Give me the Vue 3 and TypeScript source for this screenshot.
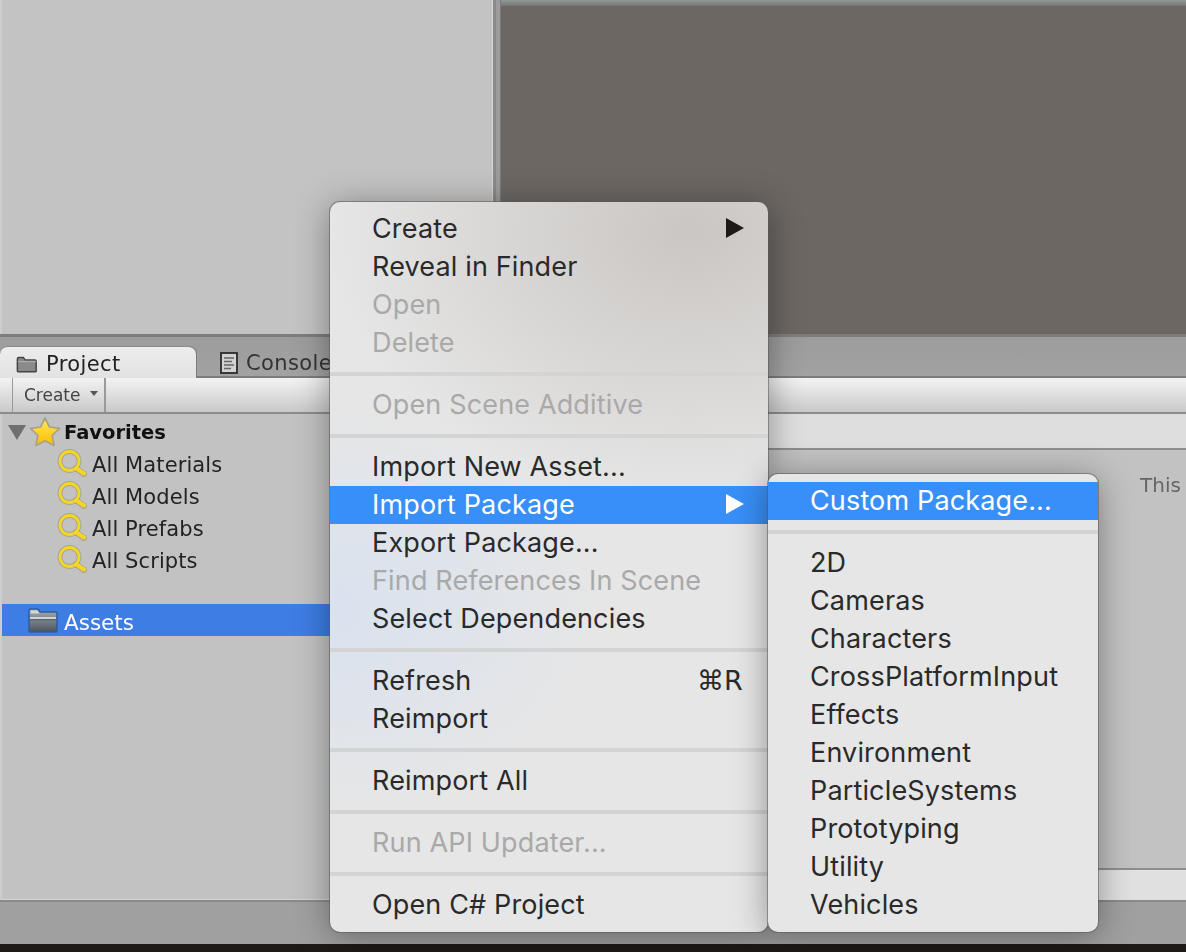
<script setup lang="ts">
type Row = { label?: string; off?: boolean; on?: boolean; sub?: boolean; key?: string; sep?: boolean }

const mainMenu: Row[] = [
  { label: 'Create', sub: true },
  { label: 'Reveal in Finder' },
  { label: 'Open', off: true },
  { label: 'Delete', off: true },
  { sep: true },
  { label: 'Open Scene Additive', off: true },
  { sep: true },
  { label: 'Import New Asset...' },
  { label: 'Import Package', on: true, sub: true },
  { label: 'Export Package...' },
  { label: 'Find References In Scene', off: true },
  { label: 'Select Dependencies' },
  { sep: true },
  { label: 'Refresh', key: '⌘R' },
  { label: 'Reimport' },
  { sep: true },
  { label: 'Reimport All' },
  { sep: true },
  { label: 'Run API Updater...', off: true },
  { sep: true },
  { label: 'Open C# Project' },
]

const subMenu: Row[] = [
  { label: 'Custom Package...', on: true },
  { sep: true },
  ...['2D', 'Cameras', 'Characters', 'CrossPlatformInput', 'Effects', 'Environment', 'ParticleSystems', 'Prototyping', 'Utility', 'Vehicles'].map((label) => ({ label })),
]

const favorites = ['All Materials', 'All Models', 'All Prefabs', 'All Scripts']
</script>

<template>
  <div class="window">
    <div class="top">
      <div class="hierarchy"></div>
      <div class="split"></div>
      <div class="scene"><div class="scene-strip"></div></div>
    </div>

    <div class="tabs">
      <div class="tab active">
        <svg width="22" height="20" viewBox="0 0 24 20" class="tab-icon">
          <path d="M1.500 17.500V4.500q0-1.500 1.500-1.500h5l2 2.500h10.500q1.500 0 1.500 1.500v10.500q0 1-1 1H2.500q-1 0-1-1z" fill="#8a8a8a" stroke="#444" stroke-width="1.600" />
          <path d="M2 7.500h20" stroke="#b5b5b5" stroke-width="1" />
        </svg>
        <span>Project</span>
      </div>
      <div class="tab">
        <svg width="18" height="22" viewBox="0 0 18 22" class="tab-icon">
          <rect x="1" y="1" width="16" height="20" fill="#d2d2d2" stroke="#2b2b2b" stroke-width="1.800" />
          <path d="M4 6h10M4 9.500h8M4 13h10M4 16.500h7" stroke="#666" stroke-width="1.500" />
        </svg>
        <span>Console</span>
      </div>
    </div>

    <div class="toolbar">
      <div class="create-btn">
        <span>Create</span>
        <i class="caret"></i>
      </div>
    </div>

    <div class="browser">
      <aside class="sidebar">
        <div class="fav-head">
          <i class="fold"></i>
          <svg width="32" height="30" viewBox="0 0 32 30">
            <defs>
              <linearGradient id="star-fill" x1="0" y1="0" x2="0" y2="1">
                <stop offset="0" stop-color="#ffe65a" />
                <stop offset="1" stop-color="#fdbf00" />
              </linearGradient>
            </defs>
            <path d="M16 1l4.500 9 10 1.400-7.300 7 1.800 10L16 23.700l-9 4.700 1.800-10-7.300-7 10-1.400z" fill="url(#star-fill)" stroke="#a8a288" stroke-width="1.700" stroke-linejoin="round" />
          </svg>
          <span>Favorites</span>
        </div>
        <div v-for="f in favorites" :key="f" class="fav-row">
          <svg width="30" height="30" viewBox="0 0 30 30">
            <circle cx="12.500" cy="12" r="9.500" fill="none" stroke="#8f8f70" stroke-width="4.800" opacity=".55" />
            <path d="M19 19l8 6" stroke="#8f8f70" stroke-width="6" stroke-linecap="round" opacity=".55" />
            <circle cx="12.500" cy="12" r="9.500" fill="none" stroke="#f5d624" stroke-width="2.800" />
            <path d="M19 19l8 5.500" stroke="#f5d624" stroke-width="4" stroke-linecap="round" />
          </svg>
          <span>{{ f }}</span>
        </div>
        <div class="assets-row">
          <svg width="30" height="26" viewBox="0 0 30 26">
            <defs>
              <linearGradient id="folder-fill" x1="0" y1="0" x2="0" y2="1">
                <stop offset="0" stop-color="#a8aeb3" />
                <stop offset="1" stop-color="#4b555c" />
              </linearGradient>
            </defs>
            <path d="M1 24V4q0-2 2-2h7l2 3h16q1 0 1 1v18q0 1-1 1H2q-1 0-1-1z" fill="url(#folder-fill)" stroke="#2f5c9e" stroke-width="1.500" />
            <path d="M2.500 3.500h7l2 3h-9z" fill="#d2d6d8" />
            <path d="M2 10h26v2H2z" fill="#cfd3d6" />
            <path d="M2 12h26v1.500H2z" fill="#5d676e" />
          </svg>
          <span>Assets</span>
        </div>
      </aside>
      <section class="content">
        <div class="crumbs"></div>
        <div class="empty"><span>This</span></div>
        <div class="foot"></div>
      </section>
    </div>

    <div class="status"></div>
    <div class="desktop"></div>

    <div class="menu main">
      <template v-for="(r, i) in mainMenu" :key="i">
        <div v-if="r.sep" class="sep"></div>
        <div v-else class="item" :class="{ off: r.off, on: r.on }">
          <span>{{ r.label }}</span>
          <i v-if="r.sub" class="arrow"></i>
          <span v-if="r.key" class="shortcut">{{ r.key }}</span>
        </div>
      </template>
    </div>

    <div class="menu submenu">
      <template v-for="(r, i) in subMenu" :key="i">
        <div v-if="r.sep" class="sep"></div>
        <div v-else class="item" :class="{ on: r.on }">
          <span>{{ r.label }}</span>
        </div>
      </template>
    </div>
  </div>
</template>

<style>
html, body {
  margin: 0;
  background: #1e1a17;
}
</style>

<style scoped>
.window {
  position: relative;
  width: 1186px;
  height: 952px;
  overflow: hidden;
  display: flex;
  flex-direction: column;
  font-family: "DejaVu Sans", sans-serif;
  background: #a0a0a0;
}

.top {
  height: 334px;
  display: flex;
  flex: none;
}
.hierarchy {
  width: 492px;
  background: #c3c3c3;
  border-left: 2px solid #cdcdcd;
  box-sizing: border-box;
}
.split {
  width: 9px;
  background: linear-gradient(90deg, #d8d8d8 0 1px, #8a8a8a 1px 4px, #9c9c9c 4px 8px, #7a7a7a 8px);
}
.scene {
  flex: 1;
  background: #6c6763;
}
.scene-strip {
  height: 6px;
  background: linear-gradient(180deg, #8f9897, #767775);
}

.tabs {
  flex: none;
  height: 44px;
  box-sizing: border-box;
  padding-top: 9px;
  display: flex;
  border-top: 3px solid #7e7d7b;
  border-bottom: 2px solid #7c7c7c;
  background: linear-gradient(180deg, #9c9c9c, #a2a2a2);
}
.tab {
  width: 196px;
  display: flex;
  align-items: center;
  gap: 8px;
  padding-top: 3px;
  box-sizing: border-box;
  font-size: 21px;
  letter-spacing: 0.4px;
  color: #333;
}
.tab span,
.create-btn span,
.sidebar span,
.empty span {
  filter: blur(0.35px);
}
.tab.active {
  background: linear-gradient(180deg, #ededed, #e2e2e2);
  border-top: 1px solid #8c8c8c;
  border-radius: 8px 8px 0 0;
  color: #222;
  margin-bottom: -2px;
  box-shadow: 1px 0 0 #7c7c7c;
  padding-left: 16px;
}
.tab:not(.active) {
  padding-left: 24px;
}
.tab-icon {
  flex: none;
}

.toolbar {
  flex: none;
  height: 36px;
  box-sizing: border-box;
  padding-left: 12px;
  background: linear-gradient(180deg, #f3f3f3, #c9c9c9);
  border-bottom: 2px solid #8c8c8c;
}
.create-btn {
  width: 94px;
  height: 34px;
  box-sizing: border-box;
  border-left: 1px solid #9a9a9a;
  border-right: 2px solid #9a9a9a;
  padding-left: 11px;
  display: flex;
  align-items: center;
  gap: 9px;
  font-size: 17px;
  color: #444;
}
.caret {
  width: 0;
  height: 0;
  margin-top: -4px;
  border-left: 4px solid transparent;
  border-right: 4px solid transparent;
  border-top: 5px solid #555;
}

.browser {
  flex: 1;
  display: flex;
  min-height: 0;
  border-bottom: 2px solid #8a8a8a;
}
.sidebar {
  width: 340px;
  flex: none;
  box-sizing: border-box;
  padding: 2px 0 0 0;
  background: #c2c2c2;
  border-left: 2px solid #cdcdcd;
  box-shadow: inset 0 -1px 0 #d4d4d4;
  font-size: 21px;
  color: #1c1c1c;
}
.fav-head {
  height: 32px;
  display: flex;
  align-items: center;
  padding-left: 6px;
  font-size: 19.500px;
  font-weight: 700;
  color: #111;
}
.fold {
  width: 0;
  height: 0;
  border-left: 9px solid transparent;
  border-right: 9px solid transparent;
  border-top: 15px solid #6f6f6f;
  margin-right: 3px;
}
.fav-head svg {
  margin-right: 3px;
}
.fav-row {
  height: 32px;
  display: flex;
  align-items: center;
  gap: 5px;
  padding-left: 55px;
  color: #222;
}
.fav-row span {
  padding-top: 2px;
  letter-spacing: 0.1px;
}
.assets-row {
  margin-top: 28px;
  height: 32px;
  box-sizing: border-box;
  padding: 0 0 0 26px;
  display: flex;
  align-items: center;
  gap: 6px;
  background: #3e7de4;
  color: #fff;
  font-size: 21.500px;
}
.assets-row span {
  padding-top: 4px;
}

.content {
  flex: 1;
  display: flex;
  flex-direction: column;
  min-width: 0;
}
.crumbs {
  flex: none;
  height: 34px;
  background: #dedede;
  border-bottom: 2px solid #8e8e8e;
}
.empty {
  flex: 1;
  background: #c2c2c2;
  padding: 23px 0 0 800px;
  font-size: 20px;
  color: #666;
  line-height: 24px;
  overflow: hidden;
  white-space: nowrap;
}
.foot {
  flex: none;
  height: 30px;
  background: #e0e0e0;
  border-top: 2px solid #8e8e8e;
}

.status {
  flex: none;
  height: 42px;
  background: #a0a0a0;
  border-radius: 0 0 0 8px;
}
.desktop {
  flex: none;
  height: 8px;
  background: #1e1a17;
}

.menu {
  position: absolute;
  box-sizing: border-box;
  border-radius: 10px;
  font-family: Inter, "Noto Sans", sans-serif;
  font-size: 27px;
  letter-spacing: 0.15px;
  color: #2a2a2a;
  box-shadow: 0 0 0 1px rgba(90, 90, 90, 0.55), 0 4px 34px rgba(0, 0, 0, 0.38);
}
.main {
  left: 330px;
  top: 202px;
  width: 438px;
  height: 730px;
  padding-top: 8px;
  background:
    radial-gradient(ellipse 360px 270px at 82% 4%, #cac6c3 0%, rgba(202, 198, 195, 0) 100%),
    radial-gradient(ellipse 270px 200px at 0% 56%, #d9e2ef 0%, rgba(217, 226, 239, 0) 100%),
    #e6e6e6;
}
.submenu {
  left: 768px;
  top: 474px;
  width: 330px;
  height: 458px;
  padding-top: 8px;
  background: #e6e6e6;
}
.item {
  height: 38px;
  box-sizing: border-box;
  padding: 0 24px 2px 42px;
  display: flex;
  align-items: center;
  justify-content: space-between;
  white-space: nowrap;
}
.off {
  color: #a9a9a9;
}
.on {
  background: #388ff7;
  color: #fff;
}
.sep {
  height: 24px;
  display: flex;
  align-items: center;
}
.sep::before {
  content: "";
  flex: 1;
  height: 4px;
  background: #d4d4d4;
}
.arrow {
  width: 0;
  height: 0;
  border-top: 10px solid transparent;
  border-bottom: 10px solid transparent;
  border-left: 18px solid #1d1a18;
}
.on .arrow {
  border-left-color: #fff;
}
.shortcut {
  font-family: "DejaVu Sans", sans-serif;
  font-size: 27px;
  margin-right: 1px;
}
</style>
